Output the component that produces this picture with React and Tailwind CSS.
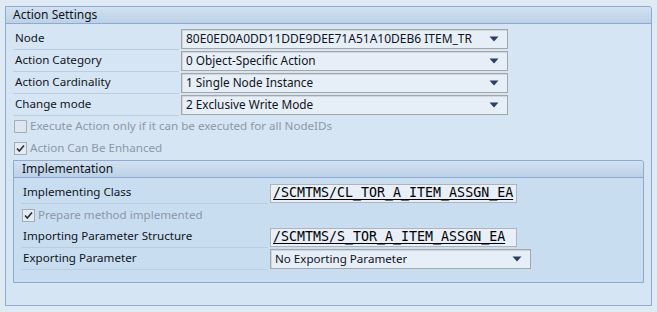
import React from 'react';

const font = { fontFamily: '"Noto Sans", "DejaVu Sans", sans-serif' };

const Arrow = () => (
  <svg width="10" height="6" viewBox="0 0 10 6" className="shrink-0">
    <path d="M0.5 0.5h9L5 5.5z" fill="#2a3d66" />
  </svg>
);

const Dropdown = ({ value, width, size = 'text-[12px]' }) => (
  <div
    className={`${width} h-[20px] flex items-center justify-between pl-[4px] pr-[8px] bg-[#e6eef7] border border-[#a6a6a6] shadow-[inset_1px_1px_0_#d0d6de] ${size} text-[#10141c]`}
  >
    <span className="truncate">{value}</span>
    <Arrow />
  </div>
);

const MonoField = ({ value }) => (
  <div className="w-[247px] h-[19px] flex items-center pl-[2px] bg-[#e8eff8] border border-[#b0b4ba] text-[13.3px] text-black underline underline-offset-2 font-['DejaVu_Sans_Mono',monospace]">
    {value}
  </div>
);

const Row = ({ label, labelW, children }) => (
  <div className="flex items-center h-[22px]">
    <div className={`${labelW} h-full flex items-end border-b border-[#b9cde3] pb-[3px] pl-[2px] text-[11.6px] text-[#10141c] mr-[2px]`}>
      {label}
    </div>
    {children}
  </div>
);

const Check = ({ label }) => (
  <div className="flex items-center h-[22px] gap-[3px]">
    <div className="w-[13px] h-[13px] border border-[#a3abb6] bg-[#e4ebf3] flex items-center justify-center">
      <svg width="9" height="9" viewBox="0 0 9 9">
        <path d="M1 4.5l2.3 2.5L8 1.5" stroke="#2b2f36" strokeWidth="1.6" fill="none" />
      </svg>
    </div>
    <span className="text-[11.6px] text-[#8a98a8]">{label}</span>
  </div>
);

const EmptyCheck = ({ label }) => (
  <div className="flex items-center h-[22px] gap-[3px]">
    <div className="w-[13px] h-[13px] border border-[#a3abb6] bg-[#dde6f0] rounded-[1px]" />
    <span className="text-[11.6px] text-[#8a98a8]">{label}</span>
  </div>
);

const Header = ({ title, pl }) => (
  <div className={`h-[17px] flex items-center ${pl} bg-gradient-to-b from-[#d2e1f1] to-[#bcd1e7] border-b border-[#8eaad0] text-[12px] text-[#10141c] rounded-tr-[3px]`}>
    {title}
  </div>
);

export default function App() {
  return (
    <div className="w-[657px] h-[312px] bg-[#dfeaf5] pt-[6px] px-[5px] overflow-hidden" style={font}>
      <div className="w-[647px] h-[300px] border border-[#8eaad0] rounded-tr-[3px] bg-[#d6e5f3] flex flex-col">
        <Header title="Action Settings" pl="pl-[7px]" />
        <div className="pl-[7px] pt-[4px] flex flex-col">
          <Row label="Node" labelW="w-[166px]">
            <Dropdown value="80E0ED0A0DD11DDE9DEE71A51A10DEB6 ITEM_TR" width="w-[327px]" />
          </Row>
          <Row label="Action Category" labelW="w-[166px]">
            <Dropdown value="0 Object-Specific Action" width="w-[327px]" size="text-[11.8px]" />
          </Row>
          <Row label="Action Cardinality" labelW="w-[166px]">
            <Dropdown value="1 Single Node Instance" width="w-[327px]" size="text-[11.8px]" />
          </Row>
          <Row label="Change mode" labelW="w-[166px]">
            <Dropdown value="2 Exclusive Write Mode" width="w-[327px]" size="text-[11.8px]" />
          </Row>
          <div className="-mt-[1px] pl-[1px]">
            <EmptyCheck label="Execute Action only if it can be executed for all NodeIDs" />
            <Check label="Action Can Be Enhanced" />
          </div>
          <div className="mt-[1px] w-[631px] h-[123px] border border-[#8eaad0] rounded-tr-[3px] bg-[#c9ddf0] flex flex-col">
            <Header title="Implementation" pl="pl-[8px]" />
            <div className="pl-[7px] pt-[4px] flex flex-col">
              <Row label="Implementing Class" labelW="w-[247px]">
                <MonoField value="/SCMTMS/CL_TOR_A_ITEM_ASSGN_EA" />
              </Row>
              <div className="pl-[1px]">
                <Check label="Prepare method implemented" />
              </div>
              <Row label="Importing Parameter Structure" labelW="w-[247px]">
                <MonoField value="/SCMTMS/S_TOR_A_ITEM_ASSGN_EA" />
              </Row>
              <Row label="Exporting Parameter" labelW="w-[247px]">
                <Dropdown value="No Exporting Parameter" width="w-[261px]" size="text-[11.6px]" />
              </Row>
            </div>
          </div>
        </div>
      </div>
    </div>
  );
}
